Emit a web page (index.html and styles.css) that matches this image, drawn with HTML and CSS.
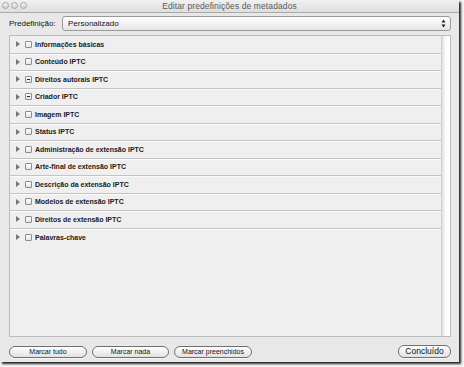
FILE: index.html
```html
<!DOCTYPE html>
<html lang="pt">
<head>
<meta charset="utf-8">
<title>Editar predefinições de metadados</title>
<link rel="stylesheet" href="styles.css">
</head>
<body>
<div class="window">
  <div class="titlebar">
    <div class="lights"><span></span><span></span><span></span></div>
    <div class="title">Editar predefinições de metadados</div>
  </div>
  <div class="content">
    <div class="preset-row">
      <span class="label">Predefinição:</span>
      <div class="popup">
        <span class="popup-text">Personalizado</span>
        <svg class="popup-arrows" width="5" height="9" viewBox="0 0 5 9"><path d="M2.5 0.5 L4.5 3.5 L0.5 3.5 Z M2.5 8.5 L4.5 5.5 L0.5 5.5 Z" fill="#222"/></svg>
      </div>
    </div>
    <div class="panel">
      <div class="list">
        <div class="row"><span class="tri"></span><span class="check"></span><span class="name">Informações básicas</span></div>
        <div class="row"><span class="tri"></span><span class="check"></span><span class="name">Conteúdo IPTC</span></div>
        <div class="row"><span class="tri"></span><span class="check mixed"></span><span class="name">Direitos autorais IPTC</span></div>
        <div class="row"><span class="tri"></span><span class="check mixed"></span><span class="name">Criador IPTC</span></div>
        <div class="row"><span class="tri"></span><span class="check"></span><span class="name">Imagem IPTC</span></div>
        <div class="row"><span class="tri"></span><span class="check"></span><span class="name">Status IPTC</span></div>
        <div class="row"><span class="tri"></span><span class="check"></span><span class="name">Administração de extensão IPTC</span></div>
        <div class="row"><span class="tri"></span><span class="check"></span><span class="name">Arte-final de extensão IPTC</span></div>
        <div class="row"><span class="tri"></span><span class="check"></span><span class="name">Descrição da extensão IPTC</span></div>
        <div class="row"><span class="tri"></span><span class="check"></span><span class="name">Modelos de extensão IPTC</span></div>
        <div class="row"><span class="tri"></span><span class="check"></span><span class="name">Direitos de extensão IPTC</span></div>
        <div class="row last"><span class="tri"></span><span class="check"></span><span class="name">Palavras-chave</span></div>
      </div>
      <div class="scrollbar"></div>
    </div>
    <div class="buttons">
      <div class="left-buttons">
        <button class="btn w78">Marcar tudo</button>
        <button class="btn w77">Marcar nada</button>
        <button class="btn w78">Marcar preenchidos</button>
      </div>
      <button class="btn done">Concluído</button>
    </div>
  </div>
</div>
</body>
</html>
```
FILE: styles.css
```css
* { box-sizing: border-box; }
html, body {
  margin: 0;
  padding: 0;
  width: 464px;
  height: 367px;
  background: #f4f4f4;
  overflow: hidden;
  font-family: "Liberation Sans", Arial, sans-serif;
}
.window {
  width: 459px;
  height: 362px;
  background: #e8e8e8;
  box-shadow: 2px 2px 2px rgba(0,0,0,0.85);
  display: flex;
  flex-direction: column;
}
.titlebar {
  height: 13px;
  flex: none;
  background: linear-gradient(#f0f0f0, #dedede);
  border-bottom: 1px solid #a9a9a9;
  position: relative;
  display: flex;
  align-items: center;
  justify-content: center;
}
.lights {
  position: absolute;
  left: 2px;
  top: 2px;
  display: flex;
  gap: 2px;
}
.lights span {
  width: 7px;
  height: 7px;
  border-radius: 50%;
  border: 1px solid #a4a4a4;
  background: linear-gradient(#f4f4f4, #d4d4d4);
}
.title {
  font-size: 8.5px;
  color: #5a5a5a;
  line-height: 12px;
  letter-spacing: 0.1px;
}
.content {
  flex: 1;
  display: flex;
  flex-direction: column;
  padding: 3px 8px 0 9px;
}
.preset-row {
  display: flex;
  align-items: center;
  height: 15px;
  gap: 3px;
}
.label {
  font-size: 8px;
  color: #111;
  width: 50px;
  white-space: nowrap;
}
.popup {
  flex: 1;
  height: 15px;
  border: 1px solid #9a9a9a;
  border-radius: 3px;
  background: linear-gradient(#ffffff, #f2f2f2 50%, #e6e6e6);
  display: flex;
  align-items: center;
  justify-content: space-between;
  padding: 0 4px 0 5px;
}
.popup-text {
  font-size: 8px;
  color: #111;
}
.popup-arrows { display: block; }
.panel {
  margin-top: 4px;
  height: 302px;
  border: 1px solid #bdbdbd;
  background: #efefef;
  display: flex;
}
.list {
  flex: 1;
  display: flex;
  flex-direction: column;
}
.row {
  height: 17.5px;
  flex: none;
  display: flex;
  align-items: center;
  border-bottom: 1px solid #c4c4c4;
  box-shadow: 0 1px 0 #fbfbfb;
  padding-left: 6px;
}
.row.last { border-bottom: none; box-shadow: none; }
.tri {
  width: 0;
  height: 0;
  border-left: 4px solid #777;
  border-top: 3px solid transparent;
  border-bottom: 3px solid transparent;
  margin-right: 5px;
}
.check {
  width: 7px;
  height: 7px;
  border: 1px solid #8c8c8c;
  border-radius: 1px;
  background: linear-gradient(#ffffff, #e4e4e4);
  margin-right: 3px;
  position: relative;
}
.check.mixed::after {
  content: "";
  position: absolute;
  left: 1px;
  top: 2px;
  width: 3px;
  height: 1px;
  background: #222;
}
.name {
  font-size: 7px;
  font-weight: bold;
  color: #1a1a1a;
  white-space: nowrap;
}
.scrollbar {
  width: 9px;
  flex: none;
  background: linear-gradient(90deg, #dcdcdc, #fafafa 40%, #ffffff);
  border-left: 1px solid #d0d0d0;
}
.buttons {
  margin-top: 8px;
  display: flex;
  justify-content: space-between;
  align-items: center;
  padding-right: 0;
}
.left-buttons {
  display: flex;
  gap: 5px;
}
.btn {
  font-family: "Liberation Sans", Arial, sans-serif;
  height: 12px;
  border: 1px solid #6f6f6f;
  border-radius: 6px;
  background: linear-gradient(#ffffff, #f0f0f0 50%, #e2e2e2);
  font-size: 7px;
  color: #111;
  padding: 0;
  line-height: 10px;
  box-shadow: 0 1px 0 #f6f6f6;
}
.w78 { width: 78px; }
.w77 { width: 77px; }
.btn.done {
  width: 53px;
  height: 13px;
  font-size: 8.5px;
  line-height: 11px;
  margin-right: 0;
}
```
